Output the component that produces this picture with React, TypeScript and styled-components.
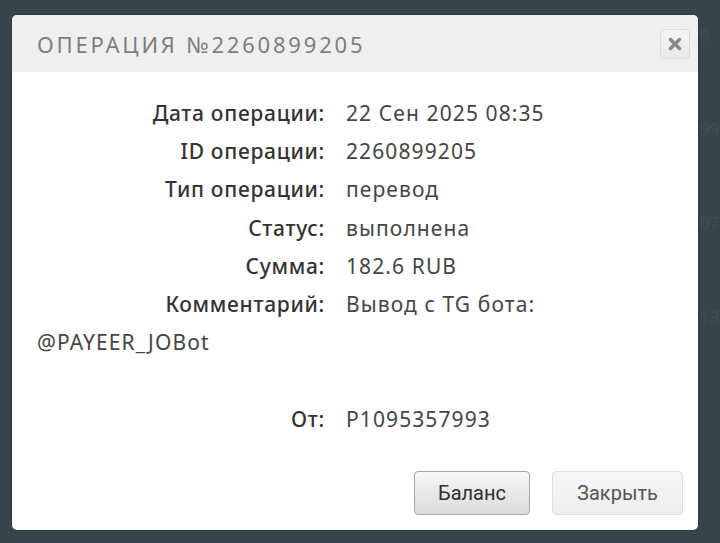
import React from 'react';
import styled, { createGlobalStyle } from 'styled-components';

const GlobalStyle = createGlobalStyle`
  html, body {
    margin: 0;
    padding: 0;
    background: #37444c;
  }
  * { box-sizing: border-box; }
`;

// Fundo escuro da página atrás do modal
const Backdrop = styled.div`
  position: relative;
  width: 720px;
  height: 543px;
  overflow: hidden;
  background: #37444c;
`;

// Restos apagados da tabela atrás do overlay
const GhostList = styled.div`
  display: flex;
  flex-direction: column;
  gap: 68px;
  padding: 22px 0 0 700px;
  font-family: 'Noto Sans', sans-serif;
  font-size: 17px;
  line-height: 26px;
  color: #414e56;
`;

const Modal = styled.div`
  position: absolute;
  top: 15px;
  left: 12px;
  width: 686px;
  height: 515px;
  background: #fff;
  border-radius: 5px;
  overflow: hidden;
  display: flex;
  flex-direction: column;
  box-shadow: 0 0 0 1px rgba(0, 0, 0, 0.15);
`;

const Header = styled.div`
  height: 57px;
  background: #efefef;
  display: flex;
  align-items: center;
  justify-content: space-between;
  padding: 0 8px 0 25px;
`;

const Title = styled.h3`
  margin: 0;
  font-family: 'Noto Sans', sans-serif;
  font-weight: 400;
  font-size: 22px;
  letter-spacing: 2.8px;
  color: #7d7d7d;
`;

const CloseButton = styled.button`
  width: 30px;
  height: 30px;
  padding: 0;
  border: 1px solid #dcdcdc;
  border-radius: 4px;
  background: linear-gradient(#f4f4f4, #e9e9e9);
  display: flex;
  align-items: center;
  justify-content: center;
`;

const Body = styled.div`
  flex: 1;
  padding: 22px 25px 0 25px;
  font-family: 'Noto Sans', sans-serif;
  font-size: 21px;
  line-height: 38.2px;
  color: #454545;
`;

const Line = styled.div`
  min-height: 38.2px;
`;

const Label = styled.span`
  display: inline-block;
  width: 288px;
  margin-right: 21px;
  text-align: right;
  font-weight: 500;
  letter-spacing: 0.7px;
  color: #333;
`;

const Value = styled.span`
  letter-spacing: 1.1px;
`;

const Footer = styled.div`
  display: flex;
  justify-content: flex-end;
  gap: 22px;
  padding: 0 15px 15px 0;
`;

const Button = styled.button<{ $primary?: boolean }>`
  height: 44px;
  padding: 0 22px;
  border-radius: 4px;
  font-family: Roboto, sans-serif;
  font-size: 20px;
  border: 1px solid ${p => (p.$primary ? '#a9a9a9' : '#dedede')};
  background: ${p =>
    p.$primary
      ? 'linear-gradient(#f7f7f7, #e6e6e6 60%, #dcdcdc)'
      : 'linear-gradient(#f6f6f6, #eeeeee)'};
  color: ${p => (p.$primary ? '#2e2e2e' : '#555')};
  min-width: ${p => (p.$primary ? '116px' : '131px')};
`;

const rows = [
  ['Дата операции:', '22 Сен 2025 08:35'],
  ['ID операции:', '2260899205'],
  ['Тип операции:', 'перевод'],
  ['Статус:', 'выполнена'],
  ['Сумма:', '182.6 RUB'],
  ['Комментарий:', 'Вывод с TG бота: @PAYEER_JOBot'],
];

export default function App() {
  return (
    <>
      <GlobalStyle />
      <Backdrop>
        <GhostList>
          <span>9</span>
          <span>99</span>
          <span>07</span>
          <span>13</span>
        </GhostList>
        <Modal>
          <Header>
            <Title>ОПЕРАЦИЯ №2260899205</Title>
            <CloseButton aria-label="close">
              <svg width="14" height="14" viewBox="0 0 14 14">
                <path d="M2.5 2.5 L11.5 11.5 M11.5 2.5 L2.5 11.5" stroke="#888" strokeWidth="3.4" strokeLinecap="round" />
              </svg>
            </CloseButton>
          </Header>
          <Body>
            {rows.map(([k, v]) => (
              <Line key={k}>
                <Label>{k}</Label>
                <Value>{v}</Value>
              </Line>
            ))}
            <Line />
            <Line>
              <Label>От:</Label>
              <Value>P1095357993</Value>
            </Line>
          </Body>
          <Footer>
            <Button $primary>Баланс</Button>
            <Button>Закрыть</Button>
          </Footer>
        </Modal>
      </Backdrop>
    </>
  );
}
